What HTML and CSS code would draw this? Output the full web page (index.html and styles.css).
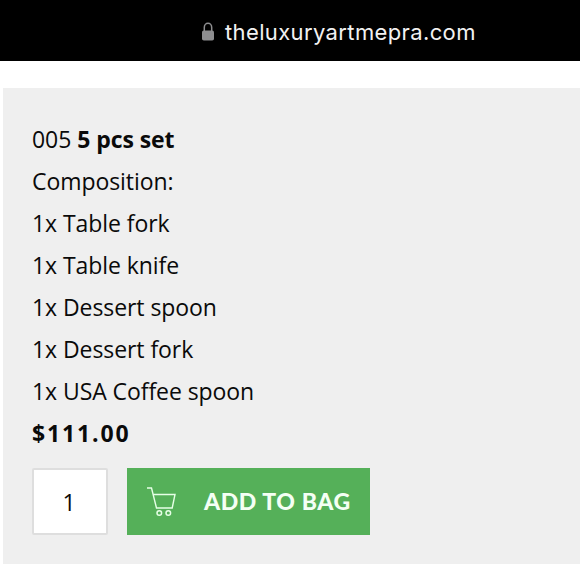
FILE: index.html
```html
<!DOCTYPE html>
<html lang="en">
<head>
    <meta charset="UTF-8">
    <meta name="viewport" content="width=device-width, initial-scale=1.0">
    <title>The Luxury Art Mepra</title>
    <link rel="stylesheet" href="styles.css">
</head>
<body>

    <div class="address-bar">
        <svg class="lock" viewBox="0 0 14 20" width="14" height="20">
            <rect x="1" y="8.500" width="12" height="10" rx="1.800" fill="#8e8e90"/>
            <path d="M3.300 9V5.500a3.700 4.200 0 0 1 7.400 0V9" fill="none" stroke="#8e8e90" stroke-width="1.500"/>
        </svg>
        <span>theluxuryartmepra.com</span>
    </div>

    <div class="product">
        <div class="details">
            <p>005 <strong>5 pcs set</strong></p>
            <p>Composition:</p>
            <p>1x Table fork</p>
            <p>1x Table knife</p>
            <p>1x Dessert spoon</p>
            <p>1x Dessert fork</p>
            <p>1x USA Coffee spoon</p>
            <p class="price">$111.00</p>
        </div>
        <div class="actions">
            <input class="quantity" type="text" value="1">
            <button class="add">
                <svg class="cart" viewBox="0 0 30 32" width="30" height="32">
                    <path d="M1 3h4.500l5 20h15.700L29 9.500H7.200" fill="none" stroke="#e6ffe6" stroke-width="1.400"/>
                    <circle cx="13.300" cy="28" r="2.300" fill="none" stroke="#e6ffe6" stroke-width="1.500"/>
                    <circle cx="22.300" cy="28" r="2.300" fill="none" stroke="#e6ffe6" stroke-width="1.500"/>
                </svg>
                <span>ADD TO BAG</span>
            </button>
        </div>
    </div>

</body>
</html>
```

FILE: styles.css
```css
* {
    box-sizing: border-box;
}
body {
    margin: 0;
    background-color: #fff;
    color: #0a0a0a;
    font-family: "Open Sans", sans-serif;
    overflow: hidden;
}
.address-bar {
    height: 61px;
    padding: 3px 0 0 201px;
    background-color: #000;
    color: #f2f2f2;
    display: flex;
    align-items: center;
    gap: 10px;
    font-family: Inter, sans-serif;
    font-size: 22px;
    letter-spacing: 0.37px;
}
.product {
    height: 476px;
    margin: 27px 0 0 3px;
    padding: 30px 29px;
    background-color: #efefef;
}
.details p {
    margin: 0;
    font-size: 23px;
    line-height: 42px;
    letter-spacing: -0.07px;
    white-space: nowrap;
}
.details .price {
    font-weight: bold;
    letter-spacing: 1.85px;
}
.actions {
    display: flex;
    gap: 19px;
    margin-top: 14px;
}
.quantity {
    width: 76px;
    height: 67px;
    padding: 0 2px 0 0;
    border: 2px solid #dedede;
    border-radius: 2px;
    background-color: #fff;
    color: #0a0a0a;
    font-family: "Open Sans", sans-serif;
    font-size: 23px;
    text-align: center;
}
.add {
    display: flex;
    align-items: center;
    gap: 28px;
    width: 243px;
    height: 67px;
    padding: 0 0 2px 19px;
    border: none;
    background-color: #55b059;
    color: #f4fff4;
    font-family: Lato, sans-serif;
    font-size: 23px;
    font-weight: 900;
    letter-spacing: 0.6px;
    white-space: nowrap;
    cursor: pointer;
}
```
